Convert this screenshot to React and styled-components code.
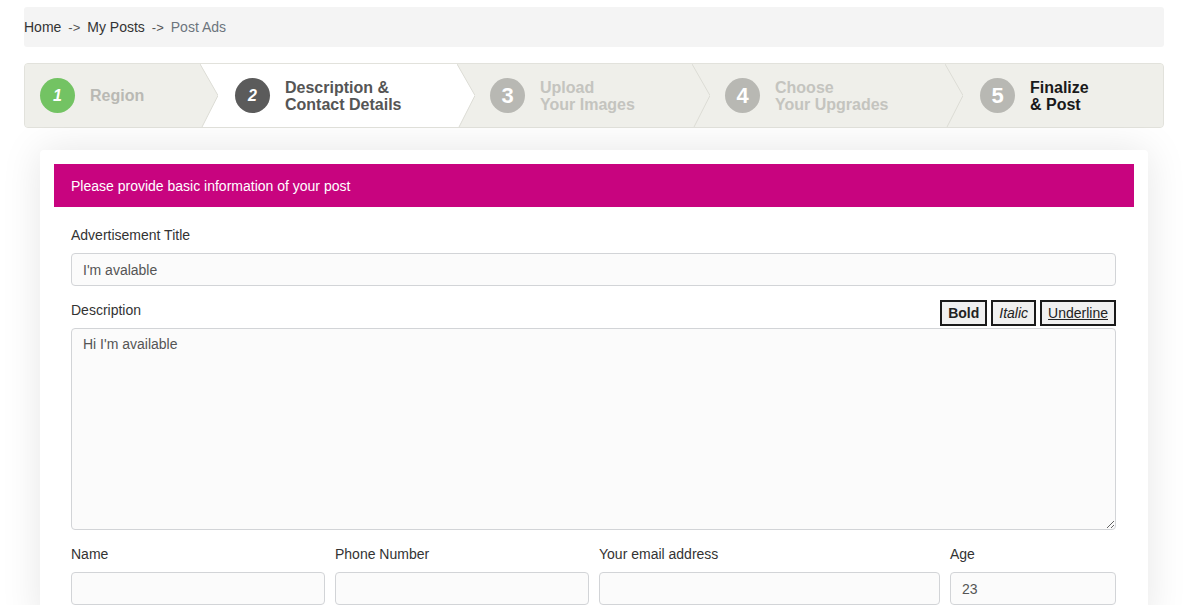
import React from "react";
import styled, { createGlobalStyle } from "styled-components";

const GlobalStyle = createGlobalStyle`
  body {
    margin: 0;
    background: #fff;
    font-family: "Liberation Sans", Arial, sans-serif;
    color: #333;
  }
`;

const Page = styled.div`
  padding: 7px 24px 0;
`;

const Breadcrumb = styled.div`
  height: 40px;
  display: flex;
  align-items: center;
  gap: 7px;
  background: #f4f4f4;
  border-radius: 3px;
  font-size: 14px;

  .sep {
    color: #555;
    font-size: 13px;
  }
  .current {
    color: #6c757d;
  }
`;

const StepsBar = styled.div`
  margin-top: 16px;
  height: 63px;
  display: flex;
  border: 1px solid #e2e2dc;
  border-radius: 4px;
  background: #efefea;
  overflow: hidden;
`;

const Step = styled.div`
  width: ${(p) => (p.$width ? `${p.$width}px` : "auto")};
  flex: ${(p) => (p.$width ? "0 0 auto" : "1 1 auto")};
  display: flex;
  align-items: center;
  gap: 15px;
  padding-left: ${(p) => p.$pad}px;
  box-sizing: border-box;
  background: ${(p) => (p.$active ? "#fff" : "#efefea")};
`;

const Circle = styled.div`
  width: 35px;
  height: 35px;
  flex-shrink: 0;
  border-radius: 50%;
  background: ${(p) => p.$bg};
  color: #fff;
  display: flex;
  align-items: center;
  justify-content: center;
  font-weight: bold;
  font-size: ${(p) => (p.$italic ? "16px" : "22px")};
  font-style: ${(p) => (p.$italic ? "italic" : "normal")};
`;

const StepLabel = styled.div`
  font-size: 16px;
  font-weight: bold;
  line-height: 17px;
  color: ${(p) => p.$color};
`;

const Chevron = ({ left, right }) => (
  <svg width="18" height="63" viewBox="0 0 18 63" preserveAspectRatio="none" style={{ flexShrink: 0, display: "block" }}>
    <rect x="0" y="0" width="18" height="63" fill={right} />
    <polygon points="0,0 18,31.5 2,63 0,63" fill={left} />
    <polyline points="0,0 18,31.5 2,63" fill="none" stroke="#dcdcd5" strokeWidth="1" />
  </svg>
);

const Card = styled.div`
  margin: 22px 16px 0;
  padding: 14px 14px 20px;
  background: #fff;
  border-radius: 4px;
  box-shadow: 0 0 40px rgba(0, 0, 0, 0.1);
`;

const CardHeader = styled.div`
  height: 43px;
  display: flex;
  align-items: center;
  padding-left: 17px;
  background: #c8047f;
  color: #fff;
  font-size: 14px;
`;

const Form = styled.div`
  padding: 18px 18px 0 17px;
`;

const Label = styled.div`
  font-size: 14px;
  line-height: 20px;
  color: #333;
  margin-bottom: 8px;
`;

const Field = styled.div`
  margin-bottom: 14px;
`;

const Input = styled.input`
  display: block;
  width: 100%;
  height: 33px;
  box-sizing: border-box;
  padding: 0 11px;
  border: 1px solid #d2d4d7;
  border-radius: 4px;
  background: #fbfbfb;
  font-family: inherit;
  font-size: 14px;
  color: #555;
  outline: none;
`;

const TextArea = styled.textarea`
  display: block;
  width: 100%;
  height: 202px;
  box-sizing: border-box;
  padding: 7px 11px;
  border: 1px solid #d2d4d7;
  border-radius: 4px;
  background: #fbfbfb;
  font-family: inherit;
  font-size: 14px;
  color: #555;
  resize: vertical;
  outline: none;
`;

const DescHead = styled.div`
  display: flex;
  justify-content: space-between;
  align-items: flex-start;
  margin-bottom: 2px;

  ${Label} {
    margin-bottom: 0;
  }
`;

const Tools = styled.div`
  display: flex;
  gap: 4px;
`;

const ToolButton = styled.button`
  height: 26px;
  padding: 0 6px;
  border: 2px solid #1a1a1a;
  background: #f0f0f0;
  font-family: inherit;
  font-size: 14px;
  color: #222;
  font-weight: ${(p) => (p.$bold ? "bold" : "normal")};
  font-style: ${(p) => (p.$italic ? "italic" : "normal")};
  text-decoration: ${(p) => (p.$underline ? "underline" : "none")};
`;

const Row = styled.div`
  display: grid;
  grid-template-columns: 254fr 254fr 341fr 166fr;
  column-gap: 10px;
`;

const steps = [
  { n: "1", label: ["Region"], width: 175, pad: 15, circle: "#73c363", color: "#b9b9b4", italic: true },
  { n: "2", label: ["Description &", "Contact Details"], width: 239, pad: 17, circle: "#5b5b5b", color: "#555", italic: true, active: true },
  { n: "3", label: ["Upload", "Your Images"], width: 217, pad: 15, circle: "#b8b8b3", color: "#c4c4bf" },
  { n: "4", label: ["Choose", "Your Upgrades"], width: 235, pad: 15, circle: "#b8b8b3", color: "#c4c4bf" },
  { n: "5", label: ["Finalize", "& Post"], pad: 17, circle: "#b8b8b3", color: "#1a1a1a" },
];

const App = () => {
  return (
    <Page>
      <GlobalStyle />
      <Breadcrumb>
        <span>Home</span>
        <span className="sep">-&gt;</span>
        <span>My Posts</span>
        <span className="sep">-&gt;</span>
        <span className="current">Post Ads</span>
      </Breadcrumb>

      <StepsBar>
        {steps.map((s, i) => (
          <React.Fragment key={s.n}>
            <Step $width={s.width} $pad={s.pad} $active={s.active}>
              <Circle $bg={s.circle} $italic={s.italic}>{s.n}</Circle>
              <StepLabel $color={s.color}>
                {s.label.map((l) => (
                  <div key={l}>{l}</div>
                ))}
              </StepLabel>
            </Step>
            {i < steps.length - 1 && (
              <Chevron
                left={s.active ? "#fff" : "#efefea"}
                right={steps[i + 1].active ? "#fff" : "#efefea"}
              />
            )}
          </React.Fragment>
        ))}
      </StepsBar>

      <Card>
        <CardHeader>Please provide basic information of your post</CardHeader>
        <Form>
          <Field>
            <Label>Advertisement Title</Label>
            <Input defaultValue="I'm avalable" />
          </Field>
          <Field>
            <DescHead>
              <Label>Description</Label>
              <Tools>
                <ToolButton $bold>Bold</ToolButton>
                <ToolButton $italic>Italic</ToolButton>
                <ToolButton $underline>Underline</ToolButton>
              </Tools>
            </DescHead>
            <TextArea defaultValue="Hi I'm available" />
          </Field>
          <Row>
            <div>
              <Label>Name</Label>
              <Input />
            </div>
            <div>
              <Label>Phone Number</Label>
              <Input />
            </div>
            <div>
              <Label>Your email address</Label>
              <Input />
            </div>
            <div>
              <Label>Age</Label>
              <Input defaultValue="23" />
            </div>
          </Row>
        </Form>
      </Card>
    </Page>
  );
};

export default App;
